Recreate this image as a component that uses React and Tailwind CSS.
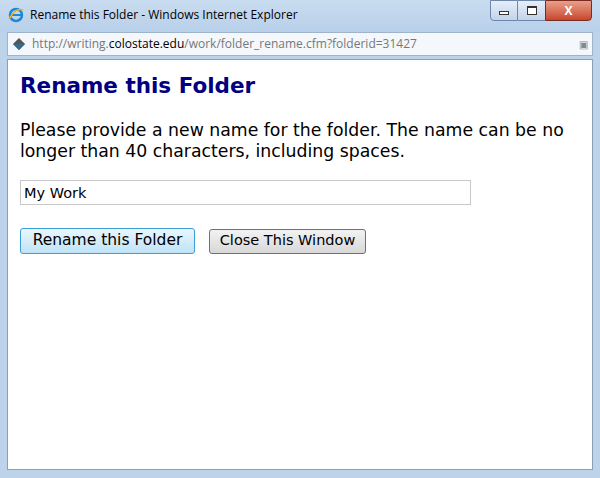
export default function App() {
  return (
    <div className="w-[600px] h-[478px] bg-[#bcd3ea] flex flex-col overflow-hidden" style={{fontFamily:'"Segoe UI","Open Sans",sans-serif'}}>
      <div className="h-[32px] shrink-0 flex items-start relative bg-gradient-to-b from-[#c9dcf0] to-[#b8d0ea]">
        <div className="flex items-center gap-[6px] pl-[8px] pt-[6px]">
          <svg width="16" height="16" viewBox="0 0 16 16"><circle cx="8" cy="8" r="6" fill="none" stroke="#1e88d8" strokeWidth="2.5"/><rect x="3" y="7" width="10" height="2" fill="#1e88d8"/><path d="M1 12 Q8 0 15 3" fill="none" stroke="#f0b020" strokeWidth="1.5"/></svg>
          <span className="text-[12px] text-black" style={{fontFamily:'"Open Sans",sans-serif'}}>Rename this Folder - Windows Internet Explorer</span>
        </div>
        <div className="absolute right-[8px] top-0 flex">
          <div className="w-[28px] h-[21px] border border-[#6d87a8] rounded-bl-[4px] bg-gradient-to-b from-[#e6eef8] to-[#c2d4ea] flex items-center justify-center"><div className="w-[10px] h-[4px] border border-[#333] bg-white mt-[5px]"/></div>
          <div className="w-[27px] h-[21px] border-y border-[#6d87a8] bg-gradient-to-b from-[#e6eef8] to-[#c2d4ea] flex items-center justify-center"><div className="w-[10px] h-[9px] border border-[#333] border-t-2 bg-white"/></div>
          <div className="w-[47px] h-[21px] border border-[#7a2a20] rounded-br-[4px] bg-gradient-to-b from-[#e8a08a] to-[#c7452c] flex items-center justify-center text-white text-[12px] font-bold">X</div>
        </div>
      </div>
      <div className="mx-[7px] h-[24px] shrink-0 bg-[#f4f7fb] border border-[#9fb3cb] flex items-center px-[4px] gap-[6px]">
        <svg width="14" height="14" viewBox="0 0 14 14"><path d="M7 1 L13 7 L7 13 L1 7 Z" fill="#555"/><path d="M1 7 L13 7 L7 13 Z" fill="#3a6a8a"/></svg>
        <span className="text-[12px] text-[#777] flex-1">http://writing.<span className="text-black">colostate.edu</span>/work/folder_rename.cfm?folderid=31427</span>
        <span className="text-[10px] text-[#888]">▣</span>
      </div>
      <div className="mx-[7px] mt-[3px] mb-[8px] flex-1 bg-white border border-[#8aa0b8] px-[12px] pt-[12px]" style={{fontFamily:'"DejaVu Sans",Verdana,sans-serif'}}>
        <h1 className="text-[21.5px] font-bold text-[#000080] leading-[28px]">Rename this Folder</h1>
        <p className="mt-[20px] text-[17.3px] leading-[21px] text-black">Please provide a new name for the folder. The name can be no longer than 40 characters, including spaces.</p>
        <input defaultValue="My Work" className="mt-[18px] w-[451px] h-[25px] border border-[#c8c8c8] px-[3px] text-[14.5px] text-black outline-none" style={{fontFamily:'"DejaVu Sans",sans-serif'}}/>
        <div className="mt-[23px] flex gap-[14px] items-center">
          <button className="h-[26px] w-[175px] rounded-[3px] border border-[#3c9fd6] bg-gradient-to-b from-[#eaf6fd] to-[#bee3f7] text-[15.5px] text-black">Rename this Folder</button>
          <button className="h-[25px] w-[157px] rounded-[3px] border border-[#707070] bg-gradient-to-b from-[#f2f2f2] to-[#d8d8d8] text-[14.5px] text-black">Close This Window</button>
        </div>
      </div>
    </div>
  );
}
